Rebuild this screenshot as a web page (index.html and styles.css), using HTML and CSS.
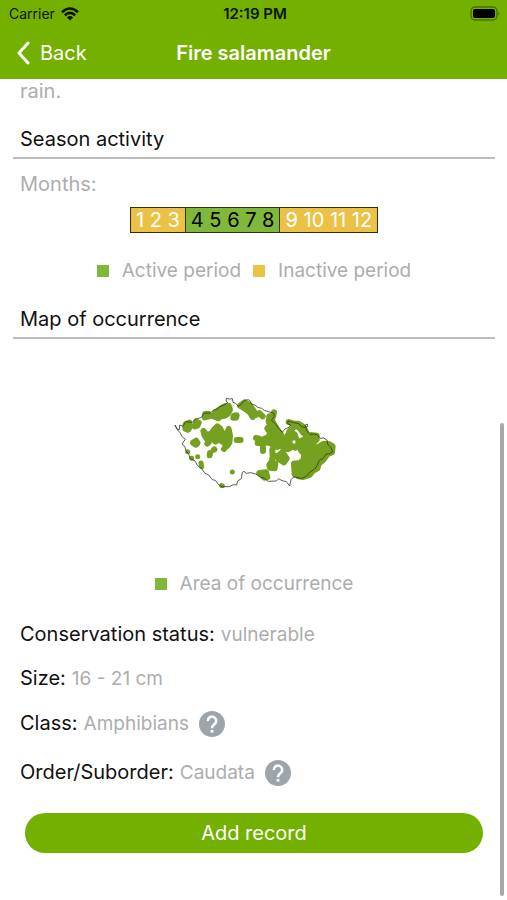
FILE: index.html
```html
<!DOCTYPE html>
<html lang="en">
<head>
<meta charset="utf-8">
<meta name="viewport" content="width=device-width, initial-scale=1">
<title>Fire salamander</title>
<link rel="stylesheet" href="styles.css">
</head>
<body>
<header class="topbar">
  <div class="status">
    <span class="carrier">Carrier
      <svg class="wifi" viewBox="0 0 18 14" width="18" height="14" aria-hidden="true"><g fill="none" stroke="#0c1400" stroke-width="2.6"><path d="M1 5.2Q9-2.2 17 5.2"/><path d="M3.8 8.2Q9 3.4 14.2 8.2"/></g><path d="M9 13.6 5.9 10.4Q9 7.6 12.1 10.4Z" fill="#0c1400"/></svg>
    </span>
    <span class="clock">12:19 PM</span>
    <svg class="battery" viewBox="0 0 31 15" width="31" height="15" aria-hidden="true"><rect x="1" y="1" width="26" height="13" rx="4" fill="none" stroke="#487200" stroke-width="1.4"/><rect x="3" y="3" width="22" height="9" rx="2"/><path d="M28.5 5.5q2 2 0 4z" fill="#487200"/></svg>
  </div>
  <nav class="nav">
    <a class="back" href="#"><svg viewBox="0 0 14 24" width="14" height="24" aria-hidden="true"><path d="M12 2 3 12l9 10" fill="none" stroke="#fff" stroke-width="3" stroke-linecap="round" stroke-linejoin="round"/></svg>Back</a>
    <h1>Fire salamander</h1>
  </nav>
</header>
<main class="content">
  <p class="line tail">rain.</p>
  <h2>Season activity</h2>
  <p class="line months-label">Months:</p>
  <div class="months">
    <span class="inactive">1 2 3</span><span class="active">4 5 6 7 8</span><span class="inactive">9 10 11 12</span>
  </div>
  <div class="legend season-legend">
    <span class="key"><i class="swatch green"></i>Active period</span>
    <span class="key"><i class="swatch yellow"></i>Inactive period</span>
  </div>
  <h2>Map of occurrence</h2>
  <figure class="map">
    <svg viewBox="0 0 504 285" width="168" height="95" role="img" aria-label="Map of occurrence in the Czech Republic">
      <g fill="#76a01f" stroke="#76a01f" stroke-width="18" stroke-linejoin="round" stroke-linecap="round">
        <path d="M47 94 58 89 59 103 54 110 46 107ZM79 86 86 89 82 98 75 100Z"/>
        <path d="M105 63 115 62 117 70 104 73ZM130 70 136 58 148 50 164 40 176 38 180 50 174 62 164 68 152 70 144 76Z"/>
        <path d="M192 68 200 67 198 74 190 74ZM210 38 224 28 236 34 246 46 254 58 248 72 240 58 224 46Z"/>
        <path d="M240 40 246 56 258 66 268 60 278 70"/>
        <path d="M100 114 104 128 112 140 124 132 136 146 148 140 160 148 172 158 178 148 180 128 176 108 170 124 158 122 150 106 142 100 132 110 124 122 110 126Z"/>
        <path d="M116 148 112 152M170 158 162 168M200 141 212 141M69 149 78 143 83 150 78 155ZM120 180 119 187M133 169 132 170"/>
        <path stroke-width="15" d="M53 176h.1M65 196h.1M83 191h.1M93 210 95 221M187 237h.1M155 278 157 279"/>
        <path d="M312 58 310 68 298 70 296 86 302 98 292 106 300 118 298 130 286 136 274 142 274 152 296 148 310 156 322 162 330 148 336 134 332 122 322 110 312 94 306 80Z"/>
        <path d="M258 135 268 137M263 150 272 148M279 164 279 174M307 170 308 190 306 204M308 190 326 188 336 178M334 160 346 168M326 198 342 208 350 196 342 184M298 216 300 224 314 226 316 212 302 210Z"/>
        <path d="M356 87 370 92 384 92 398 100 408 116 400 120 390 106 374 94M372 102 358 116"/>
        <path d="M352 128 362 118 374 124 378 136 386 148 374 154 376 164 366 160 356 168 346 156 342 140 350 142Z"/>
        <path d="M386 148 404 138 410 130 422 126 440 128 440 140 426 152 426 164 444 162 462 152 478 154 488 160 486 178 472 184 460 200 446 212 442 226 428 234 418 246 400 252 386 250 392 240 374 244 372 212 390 210 400 200 404 182 396 176 386 160Z"/>
        <path d="M268 240 288 238 292 252 284 254Z"/>
      </g>
      <circle cx="372" cy="147" r="5" fill="#fff"/>
      <path fill="none" stroke="#34381f" stroke-opacity=".8" stroke-width="3" stroke-linejoin="round" d="M15 96 21 108 28 110 29 96 39 100 47 86 67 88 76 78 93 74 103 61 121 60 130 52 143 48 150 40 163 36 173 28 168 24 169 16 179 18 187 17 189 28 197 31 205 40 215 33 223 22 235 20 241 24 244 33 255 36 263 43 275 46 283 52 295 56 311 60 313 70 304 82 315 91 326 106 337 118 345 108 357 103 362 96 353 92 354 84 367 88 386 92 396 102 406 103 413 100 412 93 406 96 409 112 421 125 432 123 441 125 450 136 461 135 471 141 473 154 483 164 488 175 480 182 469 183 459 196 448 202 441 218 434 228 419 238 409 250 395 256 371 252 363 260 359 279 349 266 336 263 326 257 319 264 295 265 283 256 273 253 257 243 242 239 229 241 222 235 217 238 214 257 203 264 200 276 190 275 178 281 156 281 146 275 136 262 127 260 116 246 104 240 95 227 83 218 75 204 60 196 56 183 47 172 45 161 36 153 46 139 35 130 31 120 22 110Z"/>
    </svg>
  </figure>
  <div class="legend map-legend"><span class="key"><i class="swatch green"></i>Area of occurrence</span></div>
  <dl class="facts">
    <div class="fact"><dt>Conservation status:</dt><dd>vulnerable</dd></div>
    <div class="fact"><dt>Size:</dt><dd>16 - 21 cm</dd></div>
    <div class="fact with-help"><dt>Class:</dt><dd>Amphibians</dd><dd class="help-cell"><button class="help" type="button" aria-label="About class"><svg viewBox="0 0 26 26" width="26" height="26"><circle cx="13" cy="13" r="13" fill="#9da5aa"/><path d="M8.8 10.1A4.2 4.2 0 1 1 15.7 13C14.1 14.3 13 14.8 13 17.2" fill="none" stroke="#fff" stroke-width="2.5"/><path d="M11.6 19h2.8v2.6h-2.8z" fill="#fff"/></svg></button></dd></div>
    <div class="fact with-help"><dt>Order/Suborder:</dt><dd>Caudata</dd><dd class="help-cell"><button class="help" type="button" aria-label="About order"><svg viewBox="0 0 26 26" width="26" height="26"><circle cx="13" cy="13" r="13" fill="#9da5aa"/><path d="M8.8 10.1A4.2 4.2 0 1 1 15.7 13C14.1 14.3 13 14.8 13 17.2" fill="none" stroke="#fff" stroke-width="2.5"/><path d="M11.6 19h2.8v2.6h-2.8z" fill="#fff"/></svg></button></dd></div>
  </dl>
  <button class="add" type="button">Add record</button>
</main>
<div class="scroll-thumb"></div>
</body>
</html>
```
FILE: styles.css
```css
* { box-sizing: border-box; }
body {
  margin: 0;
  min-height: 100vh;
  background: #fff;
  color: #111;
  font: 20px/24px Inter, "Liberation Sans", sans-serif;
}
h1, h2, p, dl, dd, figure { margin: 0; }
button { border: 0; font: inherit; cursor: pointer; }

.topbar { height: 79px; background: #73b000; }
.status {
  display: grid;
  grid-template-columns: 1fr auto 1fr;
  align-items: center;
  height: 27px;
  padding: 0 6px 0 9px;
  font-size: 14px;
  color: #0c1400;
}
.carrier { display: flex; align-items: center; gap: 6px; }
.clock { font-size: 15px; font-weight: 600; }
.battery { justify-self: end; }
.nav {
  display: grid;
  grid-template-columns: 1fr auto 1fr;
  align-items: center;
  height: 51px;
  padding: 0 16px;
  color: #fff;
}
.back { display: flex; align-items: center; gap: 10px; color: #fff; text-decoration: none; }
h1 { font-size: 20px; font-weight: 600; }

.content { padding: 0 12px 48px 13px; }
.line { padding: 0 7px; color: #adadad; }
h2 {
  padding: 0 7px 6px;
  border-bottom: 2px solid #bdbdbd;
  font-size: 20px;
  font-weight: 400;
}
.tail { margin-bottom: 24px; }
.months-label { margin: 13px 0 11px; }
.months {
  display: flex;
  width: max-content;
  margin: 0 auto;
  border: 1px solid #332d18;
}
.months span { padding: 0 5px; }
.months .inactive { background: #ecc246; color: #fff; }
.months .active { background: #80b83a; color: #000; border: solid #332d18; border-width: 0 1px; }
.legend { display: flex; justify-content: center; gap: 12px; font-size: 19px; color: #adadad; }
.key { display: flex; align-items: center; gap: 13px; }
.swatch { width: 12px; height: 12px; }
.green { background: #80b83a; }
.yellow { background: #ecc246; }
.season-legend { margin: 26px 0 24px; }
.map { display: flex; justify-content: center; padding: 54px 0 84px; }
.map svg { display: block; }
.map-legend { margin-bottom: 26px; }
.facts { padding: 0 7px; margin-bottom: 27px; }
.fact { display: flex; align-items: baseline; gap: 6px; margin-bottom: 19px; }
.fact dd { font-size: 19px; color: #adadad; }
.with-help { height: 26px; margin: 20px 0 23px; }
.with-help:last-child { margin-bottom: 0; }
.help-cell { align-self: center; }
.help { display: block; margin-left: 4px; padding: 0; background: none; }
.help svg { display: block; }
.add {
  display: block;
  width: calc(100% - 24px);
  height: 40px;
  margin: 0 auto;
  border-radius: 20px;
  background: #73b000;
  color: #fff;
}
.scroll-thumb {
  position: fixed;
  top: 47%;
  right: 3px;
  bottom: 4px;
  width: 4px;
  border-radius: 2px;
  background: #a8a8a8;
}
```
